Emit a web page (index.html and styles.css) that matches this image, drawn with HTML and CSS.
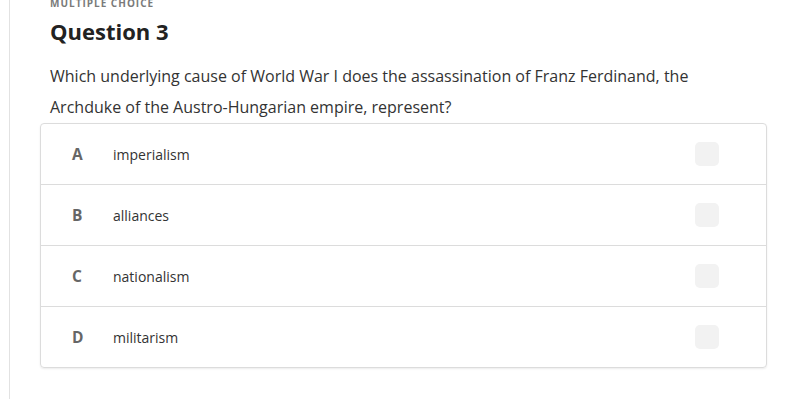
FILE: index.html
```html
<!DOCTYPE html>
<html>
<head>
<meta charset="utf-8">
<link rel="stylesheet" href="styles.css">
</head>
<body>
<div class="page">
  <div class="main">
    <div class="head">
      <div class="kicker">MULTIPLE CHOICE</div>
      <h2 class="title">Question 3</h2>
      <p class="prompt">Which underlying cause of World War I does the assassination of Franz Ferdinand, the Archduke of the Austro-Hungarian empire, represent?</p>
    </div>
    <div class="card">
      <div class="row"><span class="letter">A</span><span class="opt">imperialism</span><span class="box"></span></div>
      <div class="row"><span class="letter">B</span><span class="opt">alliances</span><span class="box"></span></div>
      <div class="row"><span class="letter">C</span><span class="opt">nationalism</span><span class="box"></span></div>
      <div class="row"><span class="letter">D</span><span class="opt">militarism</span><span class="box"></span></div>
    </div>
  </div>
</div>
</body>
</html>
```
FILE: styles.css
```css
html, body { margin: 0; padding: 0; background: #fff; overflow: hidden; }
body { font-family: "Open Sans", "Liberation Sans", sans-serif; color: #333; }
.page { margin-left: 9px; border-left: 1px solid #e2e2e2; height: 402px; padding-left: 30px; }
.main { width: 727px; margin-top: -3px; }
.head { padding-left: 10px; padding-right: 12px; }
.kicker { font-size: 10px; font-weight: 700; letter-spacing: 1px; color: #7a7a7a; line-height: 12px; }
.title { margin: 8px 0 0; font-size: 22px; font-weight: 700; color: #222; line-height: 28px; }
.prompt { margin: 16px 0 0; font-size: 16px; line-height: 31px; color: #333; }
.card { margin-top: 0; border: 1px solid #dcdcdc; border-radius: 4px; box-shadow: 0 1px 2px rgba(0,0,0,0.08); }
.row { display: flex; align-items: center; height: 60px; border-top: 1px solid #dcdcdc; }
.row:first-child { border-top: none; }
.letter { width: 41px; padding-left: 31px; font-size: 15.5px; font-weight: 700; color: #666; }
.opt { flex: 1; font-size: 14px; color: #333; }
.box { width: 24px; height: 24px; border-radius: 5px; background: #f2f2f2; margin-right: 47px; }
```
